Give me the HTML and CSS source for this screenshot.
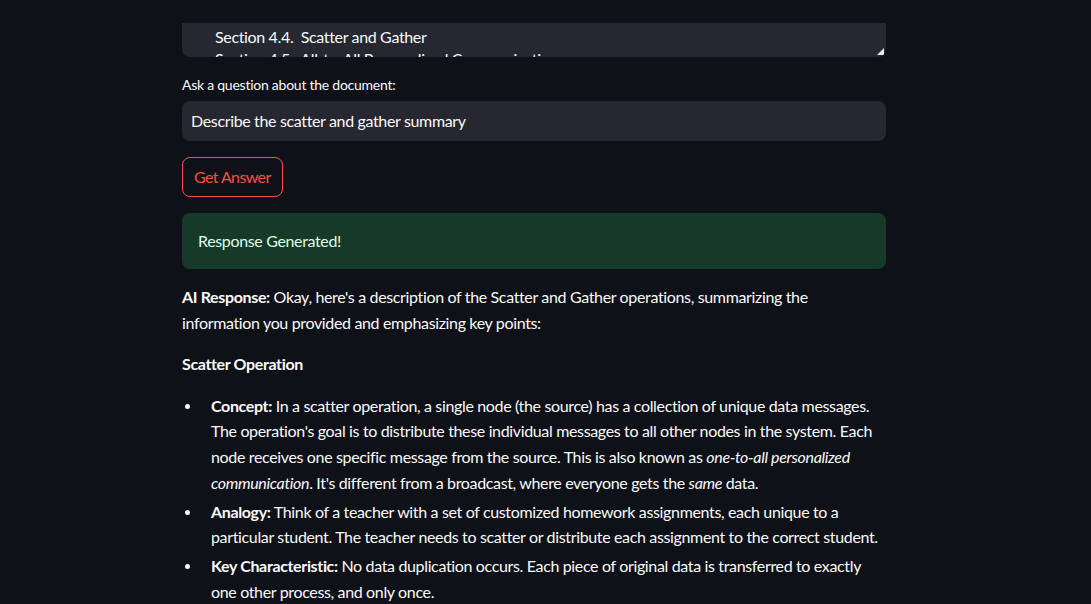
FILE: index.html
```html
<!DOCTYPE html>
<html>
<head>
<meta charset="utf-8">
<link rel="stylesheet" href="styles.css">
</head>
<body>
<div class="page">
  <main class="main">
    <div class="doc-box">
      <div class="doc-lines">
        <div class="doc-line">Section 4.4.&nbsp; Scatter and Gather</div>
        <div class="doc-line">Section 4.5.&nbsp; All-to-All Personalized Communication</div>
      </div>
      <svg class="resize" width="7" height="7" viewBox="0 0 7 7"><path d="M7 0 L7 7 L0 7 Z" fill="#e6e6e6"/></svg>
    </div>

    <label class="label">Ask a question about the document:</label>
    <div class="input">Describe the scatter and gather summary</div>

    <button class="btn">Get Answer</button>

    <div class="success">Response Generated!</div>

    <div class="md">
      <p><strong>AI Response:</strong> Okay, here's a description of the Scatter and Gather operations, summarizing the information you provided and emphasizing key points:</p>
      <p><strong>Scatter Operation</strong></p>
      <ul>
        <li><strong>Concept:</strong> In a scatter operation, a single node (the source) has a collection of unique data messages. The operation's goal is to distribute these individual messages to all other nodes in the system. Each node receives one specific message from the source. This is also known as <em>one-to-all personalized communication</em>. It's different from a broadcast, where everyone gets the <em>same</em> data.</li>
        <li><strong>Analogy:</strong> Think of a teacher with a set of customized homework assignments, each unique to a particular student. The teacher needs to scatter or distribute each assignment to the correct student.</li>
        <li><strong>Key Characteristic:</strong> No data duplication occurs. Each piece of original data is transferred to exactly one other process, and only once.</li>
      </ul>
    </div>
  </main>
</div>
</body>
</html>
```

FILE: styles.css
```css
html, body {
  margin: 0;
  padding: 0;
  background: #0e1117;
  height: 100%;
  overflow: hidden;
}
body {
  font-family: "Lato", "Liberation Sans", sans-serif;
  color: #fafafa;
  font-size: 16px;
  letter-spacing: -0.35px;
}
.page {
  padding-right: 23px;
}
.main {
  width: 704px;
  margin: 0 auto;
  padding-top: 23px;
  display: flex;
  flex-direction: column;
  align-items: flex-start;
}
.doc-box {
  position: relative;
  width: 704px;
  height: 34px;
  background: #262730;
  border-radius: 0 0 8px 8px;
  overflow: hidden;
  box-sizing: border-box;
}
.doc-lines {
  padding: 3px 0 0 33px;
  line-height: 22.4px;
}
.resize {
  position: absolute;
  right: 2px;
  bottom: 2px;
}
.label {
  margin-top: 18px;
  font-size: 14px;
  line-height: 20px;
  letter-spacing: -0.25px;
}
.input {
  margin-top: 6px;
  width: 704px;
  height: 40px;
  box-sizing: border-box;
  background: #262730;
  border-radius: 8px;
  padding: 0 9px 2px;
  display: flex;
  align-items: center;
  font-size: 16px;
}
.btn {
  margin-top: 16px;
  height: 40px;
  padding: 0 11px 2px;
  background: transparent;
  border: 1px solid #ff4b4b;
  border-radius: 8px;
  color: #ff4b4b;
  font-family: inherit;
  font-size: 16px;
  letter-spacing: -0.6px;
}
.success {
  margin-top: 16px;
  width: 704px;
  height: 56px;
  box-sizing: border-box;
  border-radius: 8px;
  background: #173928;
  color: #dffde9;
  padding: 0 16px 2px;
  display: flex;
  align-items: center;
}
.md {
  margin-top: 15px;
  width: 704px;
  line-height: 25.6px;
}
.md p {
  margin: 0 0 16px 0;
}
.md ul {
  margin: 0;
  padding-left: 29px;
  list-style: none;
}
.md li {
  position: relative;
  margin: 0 0 3.5px 0;
}
.md li::before {
  content: "";
  position: absolute;
  left: -26px;
  top: 11px;
  width: 5px;
  height: 5px;
  border-radius: 50%;
  background: #fafafa;
}
```
